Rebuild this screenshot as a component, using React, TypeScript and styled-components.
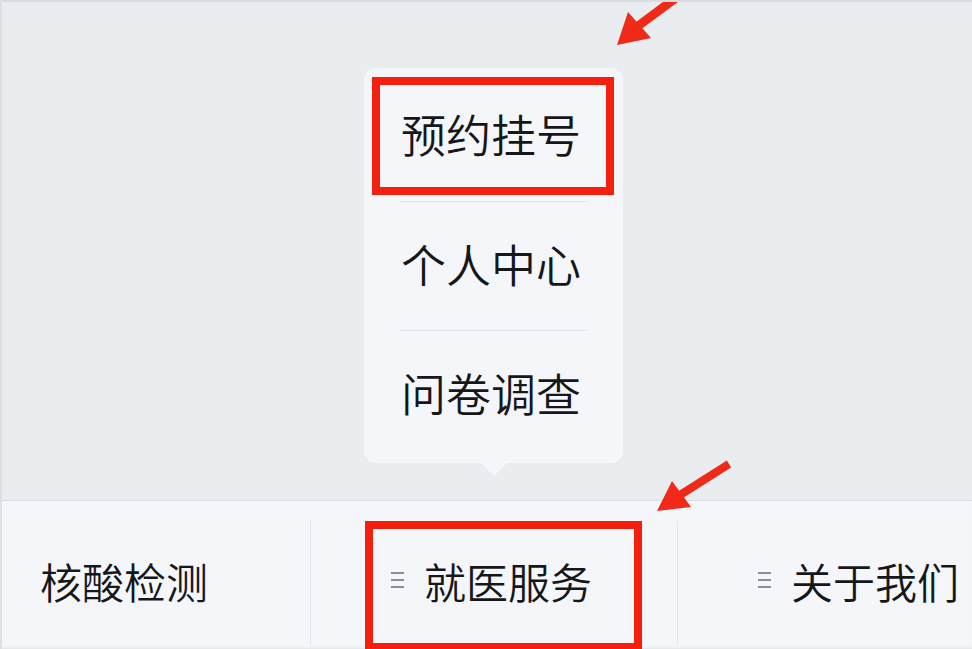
import styled, { createGlobalStyle } from 'styled-components'

interface IStyle {
  withDivider?: boolean
}

const menuItems = ['预约挂号', '个人中心', '问卷调查']

const tabs = [
  { label: '核酸检测', hasMenu: false },
  { label: '就医服务', hasMenu: true },
  { label: '关于我们', hasMenu: true },
]

function MenuIcon() {
  return (
    <svg width="15" height="18" viewBox="0 0 15 18">
      <path d="M1 2h13M1 9h13M1 16h13" stroke="#8c8f93" strokeWidth="2" />
    </svg>
  )
}

function Arrows() {
  return (
    <ArrowLayer width="972" height="649" viewBox="0 0 972 649">
      <line x1="638" y1="26" x2="692" y2="-14" stroke="#ef2a18" strokeWidth="9" />
      <polygon points="617,45 628,12 651,38" fill="#ef2a18" />
      <line x1="680" y1="495" x2="729" y2="464" stroke="#ef2a18" strokeWidth="8" />
      <polygon points="657,511 672,481 691,507" fill="#ef2a18" />
    </ArrowLayer>
  )
}

export default function App() {
  return (
    <>
      <GlobalStyle />
      <Screen>
        <Stage>
          <Slot />
          <PopoverSlot>
            <Popover>
              {menuItems.map((item) => (
                <MenuItem key={item}>{item}</MenuItem>
              ))}
            </Popover>
          </PopoverSlot>
          <Slot />
        </Stage>
        <TabBar>
          {tabs.map((tab, index) => (
            <Tab key={tab.label} withDivider={index > 0}>
              {tab.hasMenu && <MenuIcon />}
              <TabText>{tab.label}</TabText>
            </Tab>
          ))}
        </TabBar>
        <MarkBox style={{ left: 370, top: 75, width: 242, height: 118 }} />
        <MarkBox style={{ left: 363, top: 519, width: 277, height: 130 }} />
        <Arrows />
      </Screen>
    </>
  )
}

const GlobalStyle = createGlobalStyle`
  html, body {
    margin: 0;
    padding: 0;
    background: #e9edf0;
  }
  body {
    font-family: 'Noto Sans CJK SC', 'Noto Sans', sans-serif;
    font-weight: 350;
    color: #161719;
  }
`
const Screen = styled.div`
  position: relative;
  width: 972px;
  height: 649px;
  box-sizing: border-box;
  overflow: hidden;
  display: flex;
  flex-direction: column;
  background: #e9edf0;
  border-top: 2px solid #d8dbdf;
  border-left: 2px solid #dde0e3;
`
const Stage = styled.div`
  height: 498px;
  display: grid;
  grid-template-columns: 367px 367px 367px;
  margin-left: -59px;
`
const Slot = styled.div``
const PopoverSlot = styled.div`
  display: flex;
  justify-content: center;
  padding-top: 66px;
`
const Popover = styled.div`
  position: relative;
  width: 259px;
  height: 395px;
  box-sizing: border-box;
  padding: 4px 0;
  background: #f4f6f9;
  border-radius: 12px;
  display: flex;
  flex-direction: column;
  &::after {
    content: '';
    position: absolute;
    left: 50%;
    bottom: -13px;
    margin-left: -13px;
    width: 0;
    height: 0;
    border-left: 13px solid transparent;
    border-right: 13px solid transparent;
    border-top: 13px solid #f4f6f9;
  }
`
const MenuItem = styled.div`
  height: 129px;
  box-sizing: border-box;
  margin: 0 36px;
  padding: 0 5px 6px 0;
  display: flex;
  align-items: center;
  justify-content: center;
  font-size: 45px;
  white-space: nowrap;
  & + & {
    border-top: 1px solid #dfe2e6;
  }
`
const TabBar = styled.div`
  flex: 1;
  display: grid;
  grid-template-columns: 367px 367px 367px;
  margin-left: -59px;
  background: #f4f6f9;
  border-top: 1px solid #dadde1;
  box-shadow: inset 0 -3px 3px -2px #dfe2e5;
`
const Tab = styled.div<IStyle>`
  margin: 20px 0 4px;
  padding: 0 6px 6px 0;
  display: flex;
  align-items: center;
  justify-content: center;
  gap: 19px;
  border-left: 1px solid ${(props) => (props.withDivider ? '#e1e4e8' : 'transparent')};
`
const TabText = styled.span`
  font-size: 42px;
  white-space: nowrap;
`
const MarkBox = styled.div`
  position: absolute;
  box-sizing: border-box;
  border: 8px solid #f41f0e;
  pointer-events: none;
`
const ArrowLayer = styled.svg`
  position: absolute;
  left: -2px;
  top: -2px;
  pointer-events: none;
`
